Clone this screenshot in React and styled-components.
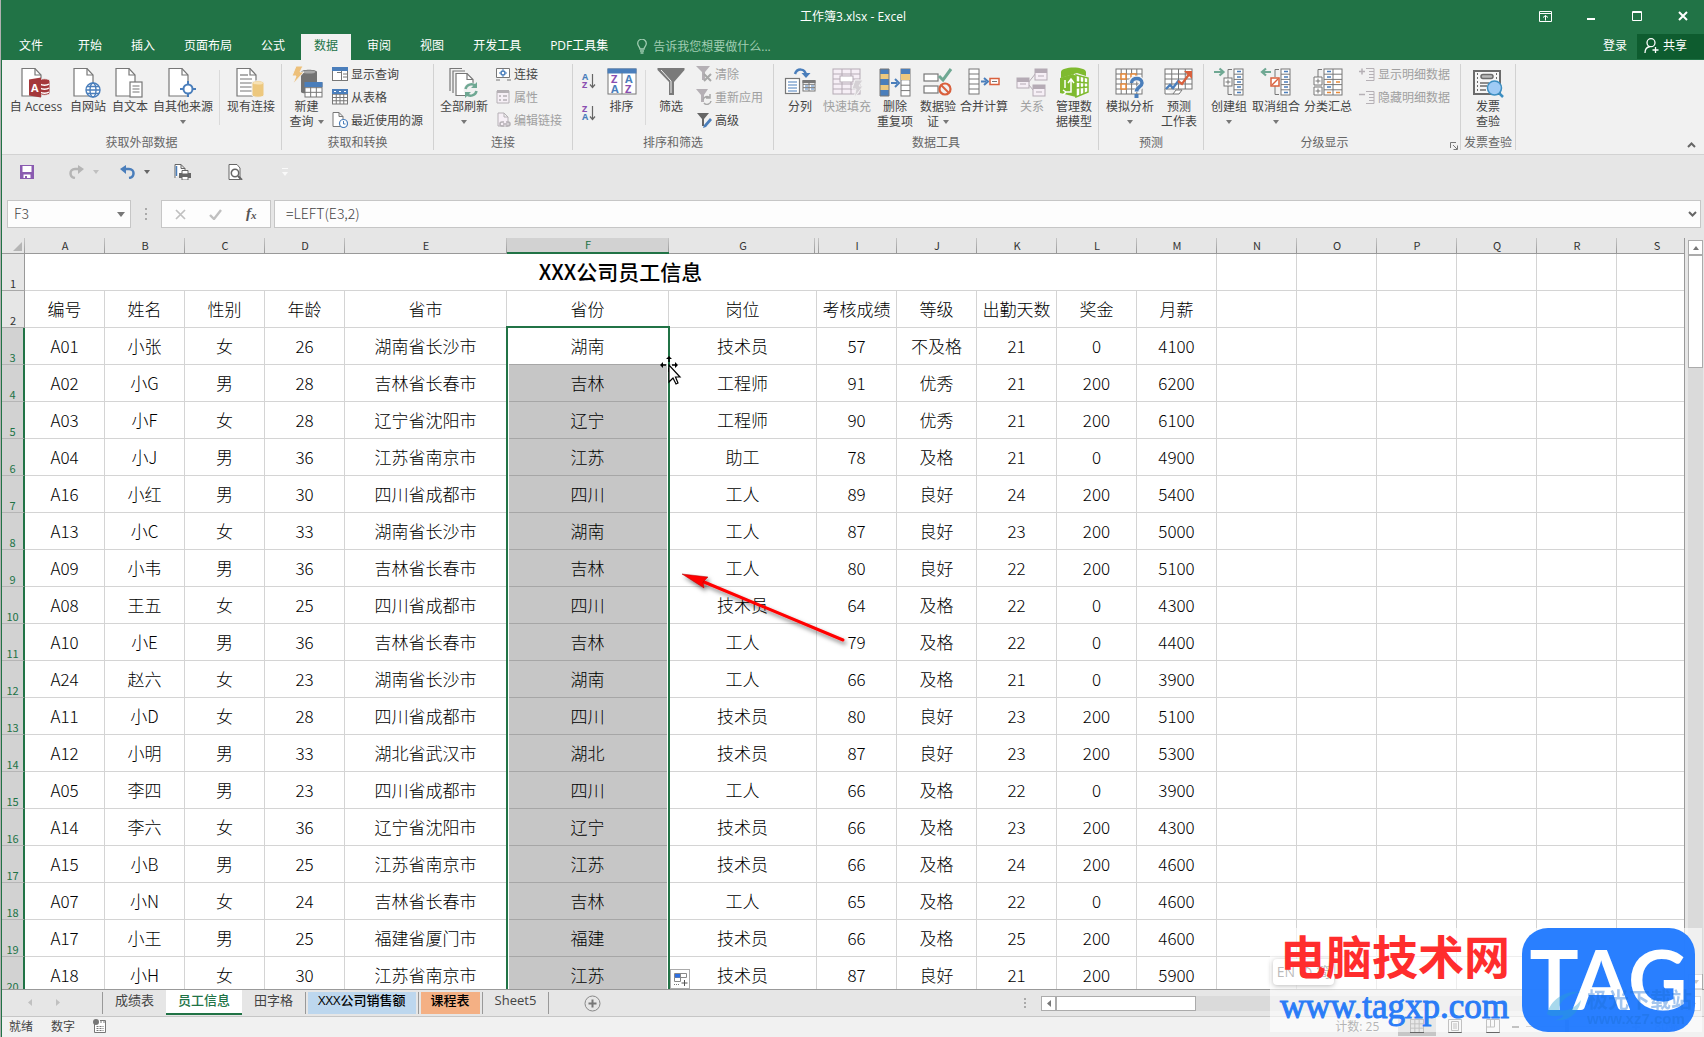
import React from "react";
import styled, { createGlobalStyle, css } from "styled-components";

const GREEN = "#217346";
const GREY = "#777777";
const BLUE = "#4a7ebb";
const SEL = "#c6c6c6";

const GlobalStyle = createGlobalStyle`
  * { box-sizing: border-box; }
  html { background: #b0b0b0; }
  body { margin: 0; overflow: hidden; }
  button, input, table { font: inherit; color: inherit; }
  button { border: 0; padding: 0; background: none; }
`;

/* ---------- window frame ---------- */

const Frame = styled.div`
  position: relative;
  height: 100vh;
  margin-left: 1px;
  display: flex;
  flex-direction: column;
  overflow: hidden;
  border-left: 1px solid ${GREEN};
  background: #e6e6e6;
  color: #444;
  font: 12px/15px "Open Sans", "Noto Sans CJK SC", sans-serif;
`;

const TitleBar = styled.header`
  display: grid;
  grid-template-columns: 1fr auto 1fr;
  align-items: center;
  height: 34px;
  flex: none;
  padding-bottom: 2px;
  background: ${GREEN};
  color: #fff;
`;

const DocTitle = styled.h1`
  grid-column: 2;
  margin: 0;
  font-size: 12px;
  font-weight: 400;
`;

const WindowButtons = styled.div`
  display: flex;
  justify-content: flex-end;
  margin-right: -2px;
`;

const WindowButton = styled.button`
  display: grid;
  place-items: center;
  width: 46px;
  height: 32px;
`;

const TabBar = styled.nav`
  display: flex;
  align-items: stretch;
  height: 26px;
  flex: none;
  padding-left: 2px;
  background: ${GREEN};
  color: #fff;
`;

const RibbonTab = styled.button`
  padding: 0 14px 3px 15px;
  line-height: 21px;
  &:first-child { padding-right: 20px; }
  ${(p) => p.$active && css`
    padding: 0 13px 3px;
    margin: 0 1px 0 2px;
    background: #f1f1f1;
    color: ${GREEN};
  `}
`;

const TellMe = styled.label`
  display: flex;
  align-items: center;
  gap: 6px;
  margin-left: 15px;
  padding-bottom: 2px;
  color: #a0cdb2;
  input {
    width: 160px;
    padding: 0;
    border: 0;
    outline: 0;
    background: transparent;
  }
  input::placeholder { color: #a0cdb2; opacity: 1; }
`;

const Account = styled.div`
  display: flex;
  margin-left: auto;
  padding-bottom: 1px;
`;

const SignIn = styled.button`
  padding: 0 10px 2px;
`;

const Share = styled.button`
  display: flex;
  align-items: center;
  gap: 4px;
  width: 67px;
  padding: 0 0 2px 7px;
  background: #0e5c2f;
`;

/* ---------- ribbon ---------- */

const Ribbon = styled.section`
  display: flex;
  height: 95px;
  flex: none;
  padding: 4px 0;
  background: #f1f1f1;
  border-bottom: 1px solid #d2d2d2;
`;

const Group = styled.div`
  position: relative;
  display: flex;
  flex-direction: column;
  justify-content: space-between;
  padding: 0 3px;
  border-right: 1px solid #d2d2d2;
`;

const GroupBody = styled.div`
  display: flex;
`;

const GroupName = styled.div`
  padding-right: ${(p) => (p.$launcher ? 15 : 0)}px;
  text-align: center;
  color: #666;
`;

const Launcher = styled.button`
  position: absolute;
  right: 2px;
  bottom: 0;
  line-height: 0;
`;

const BigButton = styled.button`
  display: flex;
  flex-direction: column;
  align-items: center;
  justify-content: flex-start;
  width: ${(p) => p.$w}px;
  padding-top: 2px;
  white-space: nowrap;
  color: ${(p) => (p.$off ? "#a0a0a0" : "#444")};
  svg.icon { flex: none; margin-bottom: 1px; }
`;

const Line = styled.span`
  display: flex;
  align-items: center;
  gap: 4px;
  height: 15px;
`;

const SmallColumn = styled.div`
  display: flex;
  flex-direction: column;
`;

const SmallButton = styled.button`
  display: flex;
  align-items: center;
  gap: 3px;
  height: 23px;
  padding: 0 7px 3px 4px;
  white-space: nowrap;
  color: ${(p) => (p.$off ? "#a0a0a0" : "#444")};
`;

const SortColumn = styled.div`
  display: flex;
  flex-direction: column;
  gap: 11px;
  width: 26px;
  padding: 8px 5px;
`;

const Divider = styled.i`
  width: 1px;
  height: 55px;
  margin: 6px 4px;
  background: #dadada;
`;

const Collapse = styled.button`
  align-self: flex-end;
  margin-left: auto;
  padding: 0 8px 2px;
  line-height: 0;
`;

/* ---------- quick access + formula bar ---------- */

const QuickBar = styled.div`
  display: flex;
  align-items: center;
  height: 33px;
  flex: none;
  padding-left: 18px;
`;

const QuickButton = styled.button`
  display: flex;
  align-items: center;
  gap: 9px;
  width: ${(p) => p.$w}px;
`;

const FormulaRow = styled.div`
  display: flex;
  height: 50px;
  flex: none;
  padding: 12px 3px 10px 5px;
`;

const Field = styled.div`
  display: flex;
  align-items: center;
  width: ${(p) => (p.$w ? p.$w + "px" : "auto")};
  flex: ${(p) => (p.$w ? "none" : "1")};
  padding: 0 ${(p) => (p.$w ? 5 : 3)}px 0 ${(p) => (p.$w ? 6 : 11)}px;
  border: 1px solid #c6c6c6;
  background: #fdfdfd;
  input {
    flex: 1;
    min-width: 0;
    height: 22px;
    padding: 0 0 2px;
    border: 0;
    outline: 0;
    background: transparent;
    font: 300 14px/20px "Noto Sans CJK SC", sans-serif;
  }
`;

const Dots = styled.span`
  display: grid;
  place-items: center;
  width: 30px;
`;

const FormulaTools = styled.div`
  display: flex;
  align-items: center;
  justify-content: space-between;
  width: 110px;
  margin-right: 3px;
  padding: 0 11px 0 13px;
  border: 1px solid #c6c6c6;
  background: #fdfdfd;
  line-height: 0;
`;

/* ---------- sheet ---------- */

const SheetArea = styled.main`
  position: relative;
  display: flex;
  flex: 1;
  min-height: 0;
`;

const Viewport = styled.div`
  flex: 1;
  min-width: 0;
  overflow: hidden;
  border-right: 1px solid #999;
`;

const Grid = styled.table`
  table-layout: fixed;
  width: 1671px;
  border-collapse: separate;
  border-spacing: 0;
  color: #000;
  background: #fff;
  font-family: "Noto Sans CJK SC", sans-serif;
`;

const HeadRow = styled.tr`
  height: 16px;
`;

const ColHead = styled.th`
  height: 16px;
  padding: 0 0 2px;
  font-size: 11px;
  font-weight: 400;
  line-height: 12px;
  color: ${(p) => (p.$on ? GREEN : "#333")};
  border-bottom: ${(p) => (p.$on ? `2px solid ${GREEN}` : "1px solid #999")};
  background: ${(p) =>
    p.$edge === "left"
      ? "linear-gradient(#c6c6c6, #999) 1px 0 / 1px 100% no-repeat, "
      : ""}
    linear-gradient(#c6c6c6, #999) right ${(p) => (p.$edge === "right" ? 2 : 0)}px top 0 / 1px 100% no-repeat
    ${(p) => (p.$on ? "#d2d2d2" : "#e6e6e6")};
`;

const Corner = styled(ColHead)`
  line-height: 0;
  text-align: right;
  padding: 2px 3px 0 0;
`;

const Row = styled.tr`
  height: 37px;
`;

const RowHead = styled.th`
  height: 37px;
  padding: 0;
  vertical-align: bottom;
  font-size: 11px;
  font-weight: 400;
  line-height: 14px;
  color: ${(p) => (p.$on ? GREEN : "#333")};
  background: ${(p) => (p.$on ? "#d2d2d2" : "#e6e6e6")};
  border-bottom: 1px solid ${(p) => (p.$on ? "#b5b5b5" : "#a8a8a8")};
  border-right: ${(p) => (p.$on ? `2px solid ${GREEN}` : "1px solid #999")};
`;

const Cell = styled.td`
  height: 37px;
  padding: 0;
  overflow: hidden;
  text-align: center;
  white-space: nowrap;
  font-size: 17px;
  font-weight: 300;
  line-height: 24px;
  border-right: 1px solid #d4d4d4;
  border-bottom: 1px solid #d4d4d4;
`;

const TitleCell = styled(Cell)`
  padding-bottom: 2px;
  font-size: 21px;
  font-weight: 500;
`;

const PickedCell = styled(Cell)`
  position: relative;
  overflow: visible;
  background: ${(p) => (p.$first ? "#fff" : SEL)};
  border-bottom-color: #a6a6a6;
  &::before {
    content: "";
    position: absolute;
    inset: ${(p) => (p.$first ? "-2px" : "0")} -2px -1px -1px;
    border: solid ${GREEN};
    border-width: ${(p) => (p.$first ? "2px" : "0")} 2px 0 2px;
    box-shadow: inset 1px 0 #fff, inset -1px 0 #fff;
  }
`;

const VScroll = styled.div`
  display: flex;
  flex-direction: column;
  width: 15px;
  margin: 2px 1px 0 3px;
  background: #dadada;
`;

const ScrollButton = styled.button`
  display: grid;
  place-items: center;
  flex: none;
  width: 15px;
  height: 15px;
  border: 1px solid #ababab;
  background: #fff;
`;

const VThumb = styled.div`
  height: 113px;
  margin-bottom: auto;
  border: 1px solid #ababab;
  background: #fff;
`;

const ArrowMark = styled.svg`
  position: absolute;
  left: 674px;
  top: 330px;
`;

const Pointer = styled.svg`
  position: absolute;
  left: 658px;
  top: 118px;
`;

const FillOptions = styled.button`
  position: absolute;
  left: 668px;
  bottom: 0;
  display: grid;
  place-items: center;
  width: 20px;
  height: 20px;
  border: 1px solid #ababab;
  background: #fff;
`;

/* ---------- sheet tabs + status ---------- */

const SheetBar = styled.div`
  display: flex;
  align-items: flex-start;
  height: 28px;
  flex: none;
  border-top: 1px solid #999;
  border-bottom: 1px solid #c6c6c6;
  font-size: 13px;
  line-height: 21px;
`;

const SheetNav = styled.div`
  display: flex;
  align-items: center;
  gap: 24px;
  height: 24px;
  width: 100px;
  padding-left: 26px;
`;

const SheetTab = styled.button`
  height: 24px;
  padding: 0 12px 3px;
  ${(p) => p.$active && css`
    height: 25px;
    padding: 0 12px 2px;
    border-bottom: 2px solid ${GREEN};
    background: #fff;
    color: ${GREEN};
    font-weight: 500;
  `}
  ${(p) => p.$fill && css`
    height: 22px;
    margin: 2px 2px 0;
    padding: 0 10px 5px;
    line-height: 17px;
    background: ${p.$fill};
    color: #000;
    font-weight: 500;
  `}
`;

const TabRule = styled.i`
  width: 1px;
  height: 22px;
  margin-top: 2px;
  background: #999;
`;

const AddSheet = styled.button`
  display: grid;
  place-items: center;
  width: 86px;
  height: 26px;
`;

const HScroll = styled.div`
  display: flex;
  align-items: stretch;
  width: 660px;
  height: 15px;
  margin: 6px 3px 0 0;
`;

const HTrack = styled.div`
  flex: 1;
  display: flex;
  background: #dadada;
`;

const HThumb = styled.div`
  width: 140px;
  border: 1px solid #ababab;
  background: #fff;
`;

const HDots = styled.span`
  display: grid;
  place-items: center;
  width: 33px;
  height: 26px;
  margin-left: auto;
`;

const StatusBar = styled.footer`
  display: flex;
  align-items: center;
  height: 20px;
  flex: none;
  padding: 0 0 2px 7px;
  background: #f1f1f1;
  gap: 18px;
`;

const StatusRight = styled.div`
  display: flex;
  align-items: center;
  margin-left: auto;
  padding-right: 26px;
`;

const Count = styled.span`
  margin-right: 19px;
`;

const ZoomValue = styled.span`
  margin-left: 14px;
`;

const ViewButton = styled.button`
  display: grid;
  place-items: center;
  width: 38px;
  height: 20px;
  background: ${(p) => (p.$on ? "#c6c6c6" : "none")};
`;

const ZoomRange = styled.input`
  appearance: none;
  width: 100px;
  height: 12px;
  margin: 0 6px;
  background: linear-gradient(#999, #999) 0 6px / 100% 1px no-repeat;
  &::-webkit-slider-thumb {
    appearance: none;
    width: 4px;
    height: 12px;
    background: #444;
  }
`;

/* ---------- floating marks in the corner ---------- */

const ImePill = styled.div`
  position: absolute;
  right: 370px;
  bottom: 52px;
  width: 61px;
  height: 26px;
  border-radius: 4px;
  background: #fff;
  box-shadow: 0 1px 5px #555;
  font-size: 14px;
  line-height: 25px;
  text-align: center;
  white-space: nowrap;
  color: #555;
`;

const Brand = styled.aside`
  position: absolute;
  right: 2px;
  bottom: 5px;
  display: flex;
  justify-content: space-between;
  width: 432px;
  height: 104px;
  padding: 0 7px 0 10px;
  background: rgba(255, 255, 255, 0.6);
`;

const BrandText = styled.div`
  display: flex;
  flex-direction: column;
  white-space: nowrap;
`;

const BrandName = styled.strong`
  font-size: 46px;
  line-height: 56px;
  color: #ff2d2d;
`;

const BrandSite = styled.a`
  font: 35px/46px "Liberation Serif", serif;
  color: #2a7cf7;
  text-decoration: none;
  -webkit-text-stroke: 1px #2a7cf7;
`;

const BrandTag = styled.div`
  position: relative;
  width: 173px;
  height: 104px;
  border-radius: 26px;
  background: rgba(32, 122, 255, 0.96);
  color: #fff;
  font: 700 82px/100px Lato, sans-serif;
  text-align: center;
`;

const Ghost = styled.div`
  position: absolute;
  left: 23px;
  top: 58px;
  display: flex;
  align-items: center;
  color: #1c6fd6;
  opacity: 0.4;
  text-align: left;
  white-space: nowrap;
  font: 700 21px/24px "Noto Sans CJK SC", sans-serif;
  small {
    display: block;
    font: 700 15px/18px "Liberation Sans", sans-serif;
  }
`;

/* ---------- icons ---------- */

const paperProps = { fill: "#fff", stroke: GREY, strokeWidth: 1.2 };
const Paper = ({ x = 2 }) => (
  <g {...paperProps}>
    <path d={`M${x} 2.5h13l6 6.5v21h-19z`} />
    <path d={`M${x + 13} 2.5v6.5h6`} fill="none" />
  </g>
);
const Lines = ({ x, y, w, n, step = 4, c = GREY }) => (
  <path d={Array.from({ length: n }, (_, i) => `M${x} ${y + i * step}h${w}`).join("")} stroke={c} strokeWidth="1.2" fill="none" />
);
const Cells = ({ x, y, w, h, cols, rows, c = GREY, fill = "#fff", sw = 1 }) => (
  <g stroke={c} fill={fill} strokeWidth={sw}>
    <rect x={x} y={y} width={w} height={h} />
    <path
      fill="none"
      d={
        Array.from({ length: cols - 1 }, (_, i) => `M${x + ((i + 1) * w) / cols} ${y}v${h}`).join("") +
        Array.from({ length: rows - 1 }, (_, i) => `M${x} ${y + ((i + 1) * h) / rows}h${w}`).join("")
      }
    />
  </g>
);
const Letter = ({ x, y, s = 11, c, children }) => (
  <text x={x} y={y} fontSize={s} fill={c} fontWeight="700" fontFamily="Open Sans, sans-serif">{children}</text>
);

const BIG = {
  access: (
    <>
      <Paper />
      <path d="M19 15c0-3 11-3 11 0v12c0 3-11 3-11 0z" fill="#a4373a" stroke="#f1f1f1" />
      <path d="M20 18c2 1.5 7 1.5 9 0M20 22c2 1.5 7 1.5 9 0M20 26c2 1.5 7 1.5 9 0" stroke="#fff" fill="none" strokeWidth="1.5" />
      <path d="M9 13.5l12-2v20l-12-2z" fill="#a4373a" />
      <Letter x={11} y={25.5} s={11} c="#fff">A</Letter>
    </>
  ),
  web: (
    <>
      <Paper />
      <g fill="#fff" stroke={BLUE} strokeWidth="1.4">
        <circle cx="21" cy="24" r="7" />
        <ellipse cx="21" cy="24" rx="3" ry="7" fill="none" />
        <path d="M14 24h14M15 20.5h12M15 27.5h12" fill="none" />
      </g>
    </>
  ),
  text: (
    <>
      <Paper />
      <rect x="16" y="16" width="12" height="15" {...paperProps} />
      <Lines x={18.5} y={20} w={7} n={3} step={3} />
    </>
  ),
  other: (
    <>
      <Paper />
      <circle cx="21" cy="23" r="4.5" fill="#fff" stroke={BLUE} strokeWidth="2" />
      <path d="M21 15v4M21 27v4M13 23h4M25 23h4" stroke={BLUE} strokeWidth="2" />
    </>
  ),
  existing: (
    <>
      <Paper />
      <Lines x={5} y={9} w={8} n={1} />
      <Lines x={5} y={13} w={12} n={4} />
      <path d="M17 17c0-3 12-3 12 0v12c0 3-12 3-12 0z" fill="#edc87e" stroke="#f1f1f1" />
      <ellipse cx="23" cy="17" rx="5" ry="1.5" fill="#f7e2b5" />
    </>
  ),
  query: (
    <>
      <path d="M10 6c0-3 16-3 16 0v20c0 2-16 2-16 0z" fill="#737373" />
      <ellipse cx="18" cy="6" rx="6.5" ry="1.6" fill="#a8a8a8" />
      <path d="M5 0h7l-3 6h4L2 18l3-8H1z" fill="#edc07a" stroke="#f1f1f1" />
      <Cells x={14} y={17} w={17} h={14} cols={3} rows={3} />
      <rect x="13.5" y="16" width="18" height="5" fill={BLUE} />
    </>
  ),
  refresh: (
    <>
      <g {...paperProps}>
        <path d="M2 25V2.5h12M5 27V5h12" fill="none" />
        <path d="M8 7.5h11l6 6v16H8z" />
        <path d="M19 7.5v6h6" fill="none" />
      </g>
      <circle cx="23" cy="24" r="7.5" fill="#f1f1f1" />
      <g fill="none" stroke="#6fa893" strokeWidth="2.5">
        <path d="M17.5 23a6 6 0 0 1 10-3" />
        <path d="M28.5 25a6 6 0 0 1-10 3" />
      </g>
      <path d="M29 16v6h-6zM17 32v-6h6z" fill="#6fa893" />
    </>
  ),
  sort: (
    <>
      <rect x="2" y="3" width="28" height="25" fill="#fff" stroke={GREY} />
      <path d="M1.5 2.5h29v5h-29z" fill={BLUE} />
      <path d="M16 7v21" stroke={GREY} />
      <Letter x={5} y={17} c="#8a4fb0">Z</Letter>
      <Letter x={5} y={27} c={BLUE}>A</Letter>
      <Letter x={19} y={17} c={BLUE}>A</Letter>
      <Letter x={19} y={27} c="#8a4fb0">Z</Letter>
    </>
  ),
  filter: (
    <>
      <path d="M2.5 2h27v2L19 16v13h-5V16L2.5 4z" fill="#7a7a7a" />
      <path d="M6 4l10 11v12" fill="none" stroke="#f1f1f1" />
    </>
  ),
  columns: (
    <>
      <rect x="1.5" y="12.5" width="14" height="15" {...paperProps} />
      <Lines x={4} y={16} w={9} n={4} step={3} c={BLUE} />
      <Cells x={19} y={15} w={12} h={10} cols={2} rows={3} c={GREY} />
      <path d="M18.5 14h13v3h-13z" fill={GREY} />
      <path d="M21 20h3M27 20h3M21 23h3M27 23h3" stroke={BLUE} />
      <path d="M11 8c2-6 10-6 11 1" fill="none" stroke={BLUE} strokeWidth="2.5" />
      <path d="M17.5 7h9l-4.5 5z" fill={BLUE} />
    </>
  ),
  flash: (
    <>
      <Cells x={2} y={3} w={27} h={25} cols={3} rows={5} c="#b5abb5" fill="#f6eff6" />
      <rect x="9" y="10" width="13" height="6" fill="#fff" stroke="#b5abb5" />
      <path d="M24 14h8l-4 6h4l-9 12 2-9h-4z" fill="#d4d0d4" stroke="#f1f1f1" />
    </>
  ),
  dedupe: (
    <>
      <rect x="1" y="3" width="9" height="27" fill="#edc87e" />
      <path d="M1 3h9v5H1zM1 13h9v6H1zM1 24h9v6H1z" fill={BLUE} />
      <path d="M1 3h9v27H1z" fill="none" stroke={GREY} />
      <Cells x={22} y={3} w={9} h={27} cols={1} rows={5} />
      <path d="M22 3h9v5h-9z" fill={BLUE} />
      <path d="M22 8h9v6h-9z" fill="#edc87e" />
      <path d="M12 17h6" stroke={BLUE} strokeWidth="2" />
      <path d="M16 13l4 4-4 4" fill="none" stroke={BLUE} strokeWidth="2" />
    </>
  ),
  validate: (
    <>
      <rect x="2" y="8" width="14" height="7" {...paperProps} />
      <rect x="2" y="20" width="14" height="7" {...paperProps} />
      <path d="M17 10l4 4 8-11" fill="none" stroke="#6fa893" strokeWidth="3" />
      <circle cx="23" cy="23" r="5.5" fill="#f1f1f1" stroke="#d9603d" strokeWidth="2.2" />
      <path d="M19 19l8 8" stroke="#d9603d" strokeWidth="2" />
    </>
  ),
  merge: (
    <>
      <Cells x={1} y={3} w={10} h={25} cols={1} rows={5} />
      <path d="M13 15.5h5" stroke={BLUE} strokeWidth="2" />
      <path d="M16 12l4 3.5-4 3.5" fill="none" stroke={BLUE} strokeWidth="2" />
      <rect x="22" y="12.5" width="9" height="6" fill="#fff" stroke="#d9603d" strokeWidth="1.5" />
      <path d="M24 15.5h5" stroke={GREY} />
    </>
  ),
  relation: (
    <g stroke="#b5abb5" fill="#f6eff6">
      <path d="M12 17l8-10M12 18l6 7" fill="none" />
      <rect x="19" y="3" width="12" height="11" /><path d="M19 5h12" strokeWidth="4" />
      <rect x="1" y="12" width="12" height="10" /><path d="M1 14h12" strokeWidth="4" />
      <rect x="17" y="19" width="12" height="11" /><path d="M17 21h12" strokeWidth="4" />
      <path d="M22 10h6M4 18h6M20 26h6" />
    </g>
  ),
  model: (
    <>
      <path d="M3 6c0-6 25-6 25 0v4l-9-3L3 12z" fill="#7fba2f" />
      <path d="M2 12l13-4 3 2v21L2 27z" fill="#7fba2f" />
      <path d="M18 9l12 3v14l-12 5z" fill="#fff" stroke="#7fba2f" strokeWidth="1.5" />
      <path d="M22 10v19M26 11v17M18 16l12 1M18 22l12-1" stroke="#7fba2f" strokeWidth="1.5" />
      <path d="M7 26h6V14m-3 3l3-4 3 4M5 24l3 2-3 3M7 14v8" fill="none" stroke="#fff" strokeWidth="1.5" />
    </>
  ),
  whatif: (
    <>
      <Cells x={2} y={3} w={26} h={25} cols={5} rows={5} />
      <path d="M7 8h5v5H7zM7 18h5v5H7zM17 8h5v5h-5z" fill="#fff" stroke="#e98b3a" strokeWidth="1.5" />
      <path d="M17 17c0-6 11-6 11 0 0 5-5 4-5 9" fill="none" stroke="#f1f1f1" strokeWidth="6" />
      <path d="M17.5 17c0-6 10.5-6 10.5 0 0 4-5.5 4-5.5 8.5" fill="none" stroke={BLUE} strokeWidth="3.5" />
      <rect x="20.5" y="28" width="4" height="4" fill={BLUE} />
    </>
  ),
  forecast: (
    <>
      <Cells x={2} y={3} w={27} h={20} cols={4} rows={4} />
      <path d="M2 23v5h8l3-4h6l-3 4h-6" fill="#fff" stroke={GREY} />
      <path d="M3 23l4-4 3 3 6-8" fill="none" stroke={BLUE} strokeWidth="2.3" />
      <path d="M15 15l4 3 8-11" fill="none" stroke="#d9603d" strokeWidth="2.3" />
      <path d="M21 5h8v8z" fill="#d9603d" />
    </>
  ),
  group: (
    <>
      <Cells x={21} y={3} w={9} h={26} cols={1} rows={5} />
      <path d="M24 5.5h4M24 11h4M24 16h4M24 21h4M24 26.5h4" stroke={BLUE} strokeWidth="1.5" />
      <path d="M19 3.5h-4V12M15 20v8.5h4" fill="none" stroke={GREY} />
      <rect x="11" y="12" width="8" height="8" fill="#fff" stroke={GREY} />
      <path d="M15 13.5v5M12.5 16h5" stroke={GREY} />
      <path d="M1 6h9M6.5 2.5l4 3.5-4 3.5" fill="none" stroke="#6fa893" strokeWidth="2.2" />
    </>
  ),
  ungroup: (
    <>
      <Cells x={21} y={3} w={9} h={26} cols={1} rows={5} />
      <path d="M24 5.5h4M24 11h4M24 16h4M24 21h4M24 26.5h4" stroke={BLUE} strokeWidth="1.5" />
      <path d="M19 3.5h-4V11M15 20v8.5h4" fill="none" stroke={GREY} />
      <rect x="11" y="12" width="8" height="8" fill="#fff" stroke="#d9603d" strokeWidth="1.5" />
      <path d="M12 19l6-6" stroke="#d9603d" strokeWidth="1.5" />
      <path d="M2 6h9M6 2.5L2 6l4 3.5" fill="none" stroke="#6fa893" strokeWidth="2.2" />
    </>
  ),
  subtotal: (
    <>
      <Cells x={12} y={3} w={18} h={26} cols={2} rows={5} />
      <path d="M15 5.5h4M15 11h4M15 21h4" stroke={BLUE} strokeWidth="1.5" />
      <path d="M15 16h4M24 16h4M15 26.5h4M24 26.5h4" stroke="#e98b3a" strokeWidth="1.5" />
      <path d="M10 3.5H6V11" fill="none" stroke={GREY} />
      <path d="M2 11h8v8H2zM2 21h8v8H2z" fill="#fff" stroke={GREY} />
      <path d="M6 12.5v5M3.5 15h5M6 22.5v5M3.5 25h5" stroke={GREY} />
    </>
  ),
  invoice: (
    <>
      <rect x="2" y="5" width="26" height="23" fill="#f6f6f6" stroke="#6b6b6b" strokeWidth="2" />
      <path d="M5.5 7v20M24.5 7v12" stroke="#6b6b6b" strokeDasharray="2 2" />
      <rect x="9" y="8.5" width="12" height="4" rx="2" fill="#b8b8b8" stroke="#6b6b6b" strokeWidth="1.5" />
      <path d="M8 17h9M8 20h7M8 24h6" stroke="#6b6b6b" strokeWidth="1.5" />
      <circle cx="22.5" cy="22" r="7" fill="#9fcbf5" stroke="#3d8fc2" strokeWidth="1.5" />
      <path d="M27 27l4 4" stroke="#3d8fc2" strokeWidth="2.5" />
    </>
  ),
};

const SMALL = {
  showQuery: (
    <>
      <rect x=".5" y="1.5" width="15" height="13" fill="#fff" stroke={GREY} />
      <path d="M0 1h16v4H0z" fill={BLUE} />
      <path d="M9.5 5v9M11 8h4M11 11h4M5 6.5h4" stroke={GREY} />
    </>
  ),
  fromTable: (
    <>
      <Cells x={0.5} y={2} w={15} h={13} cols={4} rows={4} />
      <path d="M0 0h16v5H0z" fill={BLUE} />
      <path d="M2 2.5h2M7 2.5h2M12 2.5h2" stroke="#fff" />
    </>
  ),
  recent: (
    <>
      <path d="M1 .5h6l4 4v10H1zM7 .5v4h4" fill="#fff" stroke={GREY} />
      <circle cx="11.5" cy="11.5" r="4" fill="#fff" stroke={BLUE} strokeWidth="1.2" />
      <path d="M11.5 9v3h2" fill="none" stroke={BLUE} />
    </>
  ),
  connect: (
    <>
      <path d="M1.5 2.5h13v9h-13zM1 14h4M12 14h4" fill="#fff" stroke={GREY} />
      <circle cx="8" cy="7" r="2" fill="none" stroke={BLUE} strokeWidth="1.5" />
      <path d="M8 3v8M4 7h8" stroke={BLUE} strokeDasharray="1.5 5" />
    </>
  ),
  props: (
    <>
      <path d="M2 2h12v12H2z" fill="#f6eff6" stroke="#b5b0b5" />
      <path d="M2 2.5h12" stroke="#b5b0b5" strokeWidth="3" />
      <path d="M4 7h2M4 11h2M8 7h4M8 11h4" stroke="#b5b0b5" strokeWidth="1.5" />
    </>
  ),
  links: (
    <>
      <path d="M3 1h6l4 4v9H3zM9 1v4h4" fill="#f6eff6" stroke="#b5b0b5" />
      <path d="M9 10H7a2 2 0 0 0 0 4h2M11 10h2a2 2 0 0 1 0 4h-2M8 12h4" fill="none" stroke="#b5b0b5" strokeWidth="1.5" />
    </>
  ),
  clear: (
    <>
      <path d="M0 0h14L9 6v8H6V6z" fill="#b5b0b5" />
      <path d="M8 8l7 7M15 8l-7 7" stroke="#a8a8a8" strokeWidth="2" />
    </>
  ),
  reapply: (
    <>
      <path d="M0 0h12L8 6v7H5V6z" fill="#b5b0b5" />
      <path d="M7 11a4 4 0 0 1 7-2M15 12a4 4 0 0 1-7 2M14 5v4h-4" fill="none" stroke="#a8a8a8" strokeWidth="1.5" />
    </>
  ),
  advanced: (
    <>
      <path d="M1 1h12L8 7v7H6V7z" fill="#666" />
      <path d="M14 6l2 2-6 7-3 1 1-3z" fill={BLUE} />
    </>
  ),
  detailShow: (
    <g stroke="#b5b0b5" fill="none">
      <path d="M0 5.5h6M3 2.5v6" strokeWidth="1.5" />
      <path d="M7 2.5h8M10 5.5h5M10 8.5h5M10 11.5h5M7 14.5h8M15 2.5v12" />
    </g>
  ),
  detailHide: (
    <g stroke="#b5b0b5" fill="none">
      <path d="M0 5.5h6" strokeWidth="1.5" />
      <path d="M7 2.5h8M10 5.5h5M10 8.5h5M10 11.5h5M7 14.5h8M15 2.5v12" />
    </g>
  ),
};

const BigIcon = ({ name }) => (
  <svg className="icon" width="32" height="32" viewBox="0 0 32 32" aria-hidden="true">{BIG[name]}</svg>
);
const SmallIcon = ({ name }) => (
  <svg width="16" height="16" viewBox="0 0 16 16" aria-hidden="true">{SMALL[name]}</svg>
);
const Caret = ({ c = "#777", up }) => (
  <svg width="6" height="4" viewBox="0 0 6 4" aria-hidden="true">
    <path d={up ? "M0 4h6L3 0z" : "M0 0h6L3 4z"} fill={c} />
  </svg>
);
const SideCaret = ({ c = "#777", right }) => (
  <svg width="4" height="7" viewBox="0 0 4 7" aria-hidden="true">
    <path d={right ? "M0 0v7l4-3.5z" : "M4 0v7L0 3.5z"} fill={c} />
  </svg>
);
const SortIcon = ({ top, bottom }) => {
  const tone = (l) => (l === "A" ? BLUE : "#8a4fb0");
  return (
    <svg width="16" height="18" viewBox="0 0 16 18" overflow="visible" aria-hidden="true">
      <Letter x={1} y={8} s={9} c={tone(top)}>{top}</Letter>
      <Letter x={1} y={16} s={9} c={tone(bottom)}>{bottom}</Letter>
      <path d="M11.5 2v13M9 12.5l2.5 3 2.5-3" fill="none" stroke="#666" strokeWidth="1.2" />
    </svg>
  );
};

/* ---------- data ---------- */

const TABS = ["文件", "开始", "插入", "页面布局", "公式", "数据", "审阅", "视图", "开发工具", "PDF工具集"];

const GROUPS = [
  { name: "获取外部数据", items: [
    { icon: "access", w: 62, text: ["自 Access"] },
    { icon: "web", w: 42, text: ["自网站"] },
    { icon: "text", w: 42, text: ["自文本"] },
    { icon: "other", w: 64, text: ["自其他来源", ""], menu: true },
    { divider: true },
    { icon: "existing", w: 54, text: ["现有连接"] },
  ] },
  { name: "获取和转换", items: [
    { icon: "query", w: 43, text: ["新建", "查询"], menu: true },
    { small: [["showQuery", "显示查询"], ["fromTable", "从表格"], ["recent", "最近使用的源"]] },
  ] },
  { name: "连接", items: [
    { icon: "refresh", w: 54, text: ["全部刷新", ""], menu: true },
    { small: [["connect", "连接"], ["props", "属性", true], ["links", "编辑链接", true]] },
  ] },
  { name: "排序和筛选", items: [
    { sorts: true },
    { icon: "sort", w: 39, text: ["排序"] },
    { divider: true },
    { icon: "filter", w: 42, text: ["筛选"] },
    { small: [["clear", "清除", true], ["reapply", "重新应用", true], ["advanced", "高级"]] },
  ] },
  { name: "数据工具", items: [
    { icon: "columns", w: 46, text: ["分列"] },
    { icon: "flash", w: 48, text: ["快速填充"], off: true },
    { icon: "dedupe", w: 48, text: ["删除", "重复项"] },
    { icon: "validate", w: 38, text: ["数据验", "证"], menu: true },
    { icon: "merge", w: 54, text: ["合并计算"] },
    { icon: "relation", w: 42, text: ["关系"], off: true },
    { icon: "model", w: 42, text: ["管理数", "据模型"] },
  ] },
  { name: "预测", items: [
    { icon: "whatif", w: 56, text: ["模拟分析", ""], menu: true },
    { icon: "forecast", w: 42, text: ["预测", "工作表"] },
  ] },
  { name: "分级显示", launcher: true, items: [
    { icon: "group", w: 44, text: ["创建组", ""], menu: true },
    { icon: "ungroup", w: 50, text: ["取消组合", ""], menu: true },
    { icon: "subtotal", w: 54, text: ["分类汇总"] },
    { small: [["detailShow", "显示明细数据", true], ["detailHide", "隐藏明细数据", true]] },
  ] },
  { name: "发票查验", items: [{ icon: "invoice", w: 48, text: ["发票", "查验"] }] },
];

const COLUMNS = [
  ["A", 80], ["B", 80], ["C", 80], ["D", 80], ["E", 162], ["F", 162], ["G", 148], ["I", 80], ["J", 80],
  ["K", 80], ["L", 80], ["M", 80], ["N", 80], ["O", 80], ["P", 80], ["Q", 80], ["R", 80], ["S", 80],
];
const BLANKS = ["N", "O", "P", "Q", "R", "S"];

const ROWS = `编号 姓名 性别 年龄 省市 省份 岗位 考核成绩 等级 出勤天数 奖金 月薪
A01 小张 女 26 湖南省长沙市 湖南 技术员 57 不及格 21 0 4100
A02 小G 男 28 吉林省长春市 吉林 工程师 91 优秀 21 200 6200
A03 小F 女 28 辽宁省沈阳市 辽宁 工程师 90 优秀 21 200 6100
A04 小J 男 36 江苏省南京市 江苏 助工 78 及格 21 0 4900
A16 小红 男 30 四川省成都市 四川 工人 89 良好 24 200 5400
A13 小C 女 33 湖南省长沙市 湖南 工人 87 良好 23 200 5000
A09 小韦 男 36 吉林省长春市 吉林 工人 80 良好 22 200 5100
A08 王五 女 25 四川省成都市 四川 技术员 64 及格 22 0 4300
A10 小E 男 36 吉林省长春市 吉林 工人 79 及格 22 0 4400
A24 赵六 女 23 湖南省长沙市 湖南 工人 66 及格 21 0 3900
A11 小D 女 28 四川省成都市 四川 技术员 80 良好 23 200 5100
A12 小明 男 33 湖北省武汉市 湖北 技术员 87 良好 23 200 5300
A05 李四 男 23 四川省成都市 四川 工人 66 及格 22 0 3900
A14 李六 女 36 辽宁省沈阳市 辽宁 技术员 66 及格 23 200 4300
A15 小B 男 25 江苏省南京市 江苏 技术员 66 及格 24 200 4600
A07 小N 女 24 吉林省长春市 吉林 工人 65 及格 22 0 4600
A17 小王 男 25 福建省厦门市 福建 技术员 66 及格 25 200 4600
A18 小H 女 30 江苏省南京市 江苏 技术员 87 良好 21 200 5900`.split("\n").map((r) => r.split(" "));

/* ---------- parts ---------- */

function RibbonItem({ item }) {
  if (item.divider) return <Divider />;
  if (item.sorts)
    return (
      <SortColumn>
        <button aria-label="升序"><SortIcon top="A" bottom="Z" /></button>
        <button aria-label="降序"><SortIcon top="Z" bottom="A" /></button>
      </SortColumn>
    );
  if (item.small)
    return (
      <SmallColumn>
        {item.small.map(([icon, text, off]) => (
          <SmallButton key={text} $off={off}><SmallIcon name={icon} />{text}</SmallButton>
        ))}
      </SmallColumn>
    );
  return (
    <BigButton $w={item.w} $off={item.off}>
      <BigIcon name={item.icon} />
      {item.text.map((t, i) => (
        <Line key={i}>
          {t}
          {item.menu && i === item.text.length - 1 && <Caret />}
        </Line>
      ))}
    </BigButton>
  );
}

function Sheet() {
  return (
    <Grid>
      <colgroup>
        <col style={{ width: 23 }} />
        {COLUMNS.map(([c, w]) => <col key={c} style={{ width: w }} />)}
      </colgroup>
      <thead>
        <HeadRow>
          <Corner>
            <svg width="9" height="9" viewBox="0 0 9 9" aria-hidden="true"><path d="M9 0v9H0z" fill="#b5b5b5" /></svg>
          </Corner>
          {COLUMNS.map(([c]) => (
            <ColHead key={c} $on={c === "F"} $edge={c === "G" ? "right" : c === "I" ? "left" : undefined}>{c}</ColHead>
          ))}
        </HeadRow>
      </thead>
      <tbody>
        <Row>
          <RowHead>1</RowHead>
          <TitleCell colSpan={12}>XXX公司员工信息</TitleCell>
          {BLANKS.map((b) => <Cell key={b} />)}
        </Row>
        {ROWS.map((row, r) => (
          <Row key={r}>
            <RowHead $on={r > 0}>{r + 2}</RowHead>
            {row.map((v, c) =>
              c === 5 && r > 0 ? <PickedCell key={c} $first={r === 1}>{v}</PickedCell> : <Cell key={c}>{v}</Cell>
            )}
            {BLANKS.map((b) => <Cell key={b} />)}
          </Row>
        ))}
      </tbody>
    </Grid>
  );
}

export default function App() {
  return (
    <Frame>
      <GlobalStyle />
      <TitleBar>
        <DocTitle>工作簿3.xlsx - Excel</DocTitle>
        <WindowButtons>
          <WindowButton aria-label="功能区显示选项">
            <svg width="13" height="11" viewBox="0 0 13 11" fill="none" stroke="#fff"><path d="M.5.5h12v10H.5zM.5 2.5h12M6.5 9.5V4.5M4 6.5l2.5-2 2.5 2" /></svg>
          </WindowButton>
          <WindowButton aria-label="最小化">
            <svg width="10" height="10" viewBox="0 0 10 10"><path d="M1 7h8v2H1z" fill="#fff" /></svg>
          </WindowButton>
          <WindowButton aria-label="最大化">
            <svg width="10" height="10" viewBox="0 0 10 10"><path d="M.5.5h9v9h-9zM0 1.5h10" fill="none" stroke="#fff" /></svg>
          </WindowButton>
          <WindowButton aria-label="关闭">
            <svg width="10" height="10" viewBox="0 0 10 10"><path d="M1 1l8 8M9 1L1 9" stroke="#fff" strokeWidth="2" /></svg>
          </WindowButton>
        </WindowButtons>
      </TitleBar>

      <TabBar>
        {TABS.map((t) => <RibbonTab key={t} $active={t === "数据"}>{t}</RibbonTab>)}
        <TellMe>
          <svg width="10" height="15" viewBox="0 0 10 15" fill="none" stroke="currentColor"><path d="M3 10C3 8 .7 7 .7 4.500a4.300 4.300 0 0 1 8.600 0C9.300 7 7 8 7 10zM3 12h4M3.500 14h3" strokeWidth="1.3" /></svg>
          <input aria-label="告诉我" placeholder="告诉我您想要做什么..." />
        </TellMe>
        <Account>
          <SignIn>登录</SignIn>
          <Share>
            <svg width="15" height="16" viewBox="0 0 15 16" fill="none" stroke="#fff" strokeWidth="1.3"><circle cx="7" cy="4.7" r="4" /><path d="M1 15c0-4 2-6 5-6.500M11.500 9v6M8.500 12h6" /></svg>
            共享
          </Share>
        </Account>
      </TabBar>

      <Ribbon>
        {GROUPS.map((g) => (
          <Group key={g.name}>
            <GroupBody>{g.items.map((it, i) => <RibbonItem key={i} item={it} />)}</GroupBody>
            <GroupName $launcher={g.launcher}>{g.name}</GroupName>
            {g.launcher && (
              <Launcher aria-label="分级显示设置">
                <svg width="8" height="8" viewBox="0 0 8 8" fill="none" stroke="#777"><path d="M.5 6V.5H6M3 3l4 4M7.5 3.5v4h-4" /></svg>
              </Launcher>
            )}
          </Group>
        ))}
        <Collapse aria-label="折叠功能区">
          <svg width="9" height="6" viewBox="0 0 9 6"><path d="M1 5l3.5-3.5L8 5" fill="none" stroke="#666" strokeWidth="2" /></svg>
        </Collapse>
      </Ribbon>

      <QuickBar>
        <QuickButton $w={49} aria-label="保存">
          <svg width="14" height="14" viewBox="0 0 14 14"><path d="M0 0h14v14H0z" fill="#8a5bb0" /><path d="M2.5 1h9v6h-9zM3.5 9.5h7V13h-7z" fill="#fff" /><path d="M5 11h2v2H5z" fill="#8a5bb0" /></svg>
        </QuickButton>
        <QuickButton $w={51} aria-label="恢复">
          <svg width="15" height="14" viewBox="0 0 15 14"><path d="M6 13C0 12 0 4 6 4h5" fill="none" stroke="#b5b5b5" strokeWidth="2.5" /><path d="M9 0l6 4-6 5z" fill="#b5b5b5" /></svg>
          <Caret c="#c0c0c0" />
        </QuickButton>
        <QuickButton $w={54} aria-label="撤消">
          <svg width="15" height="14" viewBox="0 0 15 14"><path d="M9 13c6-1 6-9 0-9H4" fill="none" stroke={BLUE} strokeWidth="2.5" /><path d="M6 0L0 4l6 5z" fill={BLUE} /></svg>
          <Caret c="#666" />
        </QuickButton>
        <QuickButton $w={54} aria-label="快速打印">
          <svg width="17" height="16" viewBox="0 0 17 16"><path d="M1 14V.5h6l4 4V7M7 .5v4h4" fill="#fff" stroke="#666" /><path d="M2.5 2v10" stroke={BLUE} strokeWidth="1.5" /><path d="M5 9h12v5H5z" fill="#666" /><path d="M8 6.5h6V10H8zM8 12.5h6V16H8z" fill="#fff" stroke="#666" /></svg>
        </QuickButton>
        <QuickButton $w={54} aria-label="打印预览">
          <svg width="15" height="16" viewBox="0 0 15 16"><path d="M1 .5h8l3 3.5v11.5H1z" fill="#fff" stroke="#666" /><circle cx="7" cy="9" r="3.7" fill="#fff" stroke="#666" strokeWidth="1.5" /><path d="M10 12l4 4" stroke="#666" strokeWidth="2" /></svg>
        </QuickButton>
        <QuickButton $w={20} aria-label="自定义快速访问工具栏">
          <svg width="6" height="8" viewBox="0 0 6 8"><path d="M0 0h6v1H0zM0 4h6L3 8z" fill="#fafafa" /></svg>
        </QuickButton>
      </QuickBar>

      <FormulaRow>
        <Field $w={124}>
          <input aria-label="名称框" defaultValue="F3" />
          <svg width="8" height="5" viewBox="0 0 8 5"><path d="M0 0h8L4 5z" fill="#777" /></svg>
        </Field>
        <Dots>
          <svg width="2" height="12" viewBox="0 0 2 12"><path d="M0 0h2v2H0zM0 5h2v2H0zM0 10h2v2H0z" fill="#aaa" /></svg>
        </Dots>
        <FormulaTools>
          <button aria-label="取消"><svg width="11" height="11" viewBox="0 0 11 11"><path d="M1 1l9 9M10 1l-9 9" stroke="#c0c0c0" strokeWidth="1.7" /></svg></button>
          <button aria-label="输入"><svg width="13" height="11" viewBox="0 0 13 11"><path d="M1 6l4 4 7-9" fill="none" stroke="#c0c0c0" strokeWidth="2.4" /></svg></button>
          <button aria-label="插入函数">
            <svg width="14" height="16" viewBox="0 0 14 16"><text x="1" y="12" fontFamily="Liberation Serif, serif" fontStyle="italic" fontWeight="700" fontSize="15" fill="#555">f</text><text x="6" y="13" fontFamily="Liberation Serif, serif" fontStyle="italic" fontWeight="700" fontSize="11" fill="#555">x</text></svg>
          </button>
        </FormulaTools>
        <Field>
          <input aria-label="编辑栏" defaultValue="=LEFT(E3,2)" />
          <svg width="9" height="6" viewBox="0 0 9 6"><path d="M1 1l3.5 3.5L8 1" fill="none" stroke="#666" strokeWidth="2" /></svg>
        </Field>
      </FormulaRow>

      <SheetArea>
        <Viewport><Sheet /></Viewport>
        <VScroll>
          <ScrollButton aria-label="向上滚动"><Caret up /></ScrollButton>
          <VThumb />
          <ScrollButton aria-label="向下滚动"><Caret /></ScrollButton>
        </VScroll>
        <ArrowMark width="180" height="86" viewBox="0 0 180 86" aria-hidden="true">
          <defs>
            <filter id="soft" x="-10%" y="-10%" width="130%" height="140%"><feDropShadow dx="2" dy="3" stdDeviation="2" floodColor="#000" floodOpacity=".5" /></filter>
          </defs>
          <g filter="url(#soft)">
            <path d="M28 14l139 58" stroke="#f00" strokeWidth="3" strokeLinecap="round" />
            <path d="M6 6l26 3-5 5 1 6z" fill="#f00" stroke="#a00" strokeWidth=".5" />
          </g>
        </ArrowMark>
        <Pointer width="24" height="30" viewBox="0 0 24 30" aria-hidden="true">
          <path d="M9 1v5M9 12v4M1 9h5M12 9h5" stroke="#000" strokeWidth="1.5" />
          <path d="M9 0l3 3H6zM0 9l3-3v6zM18 9l-3-3v6z" fill="#000" />
          <path d="M9 9v17l4-4 3 6 2-1-2.5-6H20z" fill="#fff" stroke="#000" strokeWidth="1.2" />
        </Pointer>
        <FillOptions aria-label="自动填充选项">
          <svg width="15" height="15" viewBox="0 0 15 15"><path d="M1.5 1.5h12v4h-12zM1.5 5.5h6v4h-6zM7.5 1.5v4" fill="#fff" stroke="#888" /><path d="M2 2h5v3.5H2z" fill="#2f6fe0" /><path d="M1 12.5h6" stroke="#777" strokeDasharray="1 1" /><path d="M11.5 8v6M8.5 11h6" stroke="#555" /></svg>
        </FillOptions>
      </SheetArea>

      <SheetBar>
        <SheetNav><SideCaret c="#c0c0c0" /><SideCaret c="#c0c0c0" right /></SheetNav>
        <TabRule />
        <SheetTab>成绩表</SheetTab>
        <SheetTab $active>员工信息</SheetTab>
        <SheetTab>田字格</SheetTab>
        <TabRule />
        <SheetTab $fill="#bdd7ee">XXX公司销售额</SheetTab>
        <TabRule />
        <SheetTab $fill="#f4b084">课程表</SheetTab>
        <TabRule />
        <SheetTab>Sheet5</SheetTab>
        <TabRule />
        <AddSheet aria-label="新工作表">
          <svg width="17" height="17" viewBox="0 0 17 17"><circle cx="8.5" cy="8.5" r="7.5" fill="none" stroke="#888" /><path d="M8.5 4.5v8M4.5 8.5h8" stroke="#777" strokeWidth="2" /></svg>
        </AddSheet>
        <HDots><svg width="2" height="10" viewBox="0 0 2 10"><path d="M0 0h2v2H0zM0 4h2v2H0zM0 8h2v2H0z" fill="#aaa" /></svg></HDots>
        <HScroll>
          <ScrollButton aria-label="向左滚动"><SideCaret /></ScrollButton>
          <HTrack><HThumb /></HTrack>
          <ScrollButton aria-label="向右滚动"><SideCaret right /></ScrollButton>
        </HScroll>
      </SheetBar>

      <StatusBar>
        <span>就绪</span>
        <span>数字</span>
        <svg width="14" height="14" viewBox="0 0 14 14"><path d="M1.5 5v8.5h11v-12H7" fill="#fff" stroke="#777" /><circle cx="3" cy="3" r="3" fill="#777" /><path d="M7 3h6M3.5 7.5h7M3.5 9.5h7M3.5 11.5h7" stroke="#777" strokeDasharray="2 1" /></svg>
        <StatusRight>
          <Count>计数: 25</Count>
          <ViewButton $on aria-label="普通"><svg width="14" height="14" viewBox="0 0 14 14"><Cells x={0.5} y={0.5} w={13} h={13} cols={3} rows={3} c="#666" fill="none" /></svg></ViewButton>
          <ViewButton aria-label="页面布局"><svg width="14" height="14" viewBox="0 0 14 14"><path d="M.5.5h13v13H.5zM3.5 2.5h7v9h-7zM5 5h4M5 7h4M5 9h4" fill="none" stroke="#666" /></svg></ViewButton>
          <ViewButton aria-label="分页预览"><svg width="14" height="14" viewBox="0 0 14 14"><path d="M.5.5h13v13H.5zM.5 8h8V.5M4.5.5V8" fill="none" stroke="#666" /></svg></ViewButton>
          <button aria-label="缩小"><svg width="8" height="8" viewBox="0 0 8 8"><path d="M0 4h7" stroke="#666" strokeWidth="2" /></svg></button>
          <ZoomRange type="range" aria-label="显示比例" min="10" max="150" defaultValue="67" />
          <button aria-label="放大"><svg width="8" height="8" viewBox="0 0 8 8"><path d="M0 4h8M4 0v8" stroke="#666" strokeWidth="2" /></svg></button>
          <ZoomValue>80%</ZoomValue>
        </StatusRight>
      </StatusBar>

      <ImePill>EN の 简</ImePill>
      <Brand>
        <BrandText>
          <BrandName>电脑技术网</BrandName>
          <BrandSite href="#">www.tagxp.com</BrandSite>
        </BrandText>
        <BrandTag>
          TAG
          <Ghost>
            <svg width="42" height="34" viewBox="0 0 42 34"><path d="M2 24C6 8 22 0 36 2 22 4 14 12 14 20c8 2 16-2 22-10-2 14-14 22-26 20 6-1 8-3 8-5C10 27 4 26 2 24z" fill="#27a0d0" /></svg>
            <div>极光下载站<small>www.xz7.com</small></div>
          </Ghost>
        </BrandTag>
      </Brand>
    </Frame>
  );
}
